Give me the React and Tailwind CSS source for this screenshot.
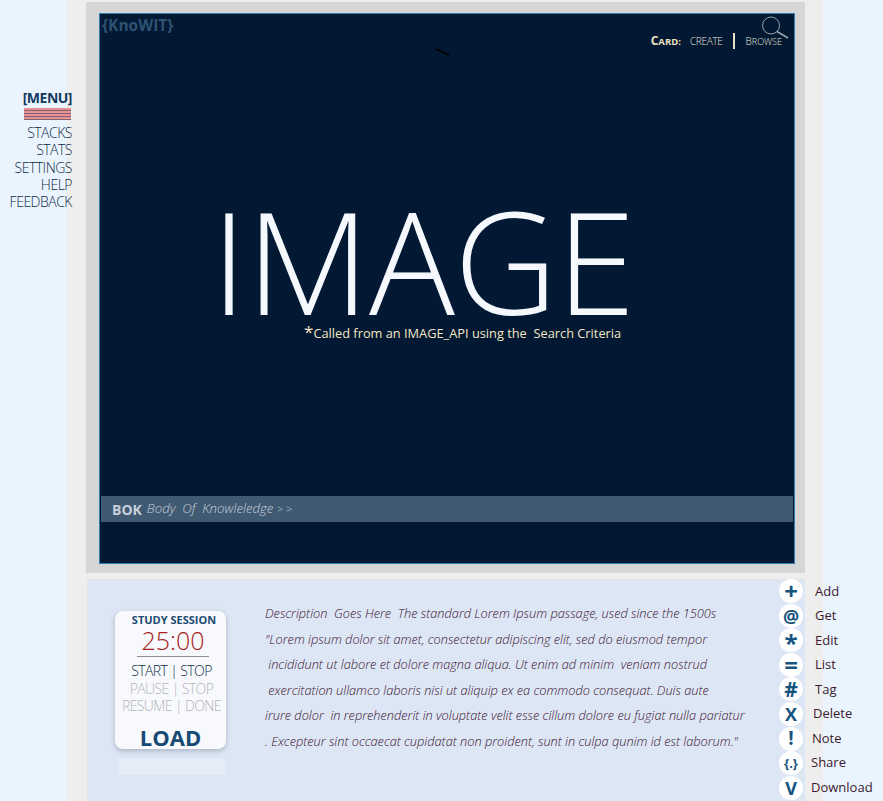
const menuItems = ['STACKS', 'STATS', 'SETTINGS', 'HELP', 'FEEDBACK'];

const actions = [
  { glyph: '+', label: 'Add', gap: 'ml-[12px]', size: 'text-[24px]' },
  { glyph: '@', label: 'Get', gap: 'ml-[12px]', size: 'text-[18px]' },
  { glyph: '*', label: 'Edit', gap: 'ml-[12px]', size: 'text-[24px] pt-[6px]' },
  { glyph: '=', label: 'List', gap: 'ml-[12px]', size: 'text-[24px]' },
  { glyph: '#', label: 'Tag', gap: 'ml-[12px]', size: 'text-[21px]' },
  { glyph: 'X', label: 'Delete', gap: 'ml-[10px]', size: 'text-[18px]' },
  { glyph: '!', label: 'Note', gap: 'ml-[9px]', size: 'text-[19px]' },
  { glyph: '{.}', label: 'Share', gap: 'ml-[8px]', size: 'text-[13px]' },
  { glyph: 'V', label: 'Download', gap: 'ml-[8px]', size: 'text-[18px]' },
];

const description = [
  'Description  Goes Here  The standard Lorem Ipsum passage, used since the 1500s',
  '"Lorem ipsum dolor sit amet, consectetur adipiscing elit, sed do eiusmod tempor',
  ' incididunt ut labore et dolore magna aliqua. Ut enim ad minim  veniam nostrud',
  ' exercitation ullamco laboris nisi ut aliquip ex ea commodo consequat. Duis aute',
  'irure dolor  in reprehenderit in voluptate velit esse cillum dolore eu fugiat nulla pariatur',
  '. Excepteur sint occaecat cupidatat non proident, sunt in culpa qunim id est laborum."',
];

function Menu() {
  return (
    <aside className="relative z-10 w-[67px] shrink-0 pt-[90px] text-right text-[14px] font-light leading-[17.3px] tracking-[-0.5px] text-[#0f2a45]">
      <div className="-ml-4 -mr-[5px] whitespace-nowrap">
        <div className="font-bold text-[#123a5e] leading-[16px]">[MENU]</div>
        <div className="ml-auto mr-px mt-[2px] mb-[4px] h-[12px] w-[47px] bg-[repeating-linear-gradient(#ec8f92_0,#ec8f92_2px,#7d6474_2px,#7d6474_3px)]" />
        {menuItems.map((item) => (
          <div key={item}>{item}</div>
        ))}
      </div>
    </aside>
  );
}

function Hero() {
  return (
    <section className="bg-[#d6d6d6] pt-[11px] px-[13px] pb-[9px] w-[719px] ml-[19px]">
      <div className="relative h-[551px] w-[696px] border border-[#2f7fb8] bg-[#021833] flex flex-col">
        <div className="relative flex items-start justify-between h-[40px]">
          <span className="pl-[2px] text-[15.5px] leading-[22px] font-bold text-[#2d5272]">{'{KnoWIT}'}</span>
          <div className="mr-[12px] mt-[18px] flex items-center text-[10px] text-[#e6e6dc] font-light">
            <span className="font-bold text-[#ece3c2] text-[12px]">C<span className="text-[9.5px]">ARD:</span></span>
            <span className="ml-[9px] tracking-[-0.3px]">CREATE</span>
            <span className="ml-[10px] mr-[11px] h-[16px] w-[2px] bg-[#e6e0c8]" />
            <span>B<span className="text-[9px]">ROWSE</span></span>
          </div>
          {/* lupa */}
          <svg className="absolute right-[5px] top-[2px]" width="28" height="24" viewBox="0 0 28 24" fill="none" stroke="#9aa3ad">
            <circle cx="10" cy="9.5" r="8.5" strokeWidth="1" />
            <path d="M16 15.5 L27 22" strokeWidth="1.6" />
          </svg>
        </div>
        <svg className="absolute left-[336px] top-[34px]" width="14" height="8" viewBox="0 0 14 8">
          <path d="M0 1 L13 7" stroke="#000" strokeWidth="1.6" />
        </svg>
        <div className="mt-[131px] pl-[111px] text-[143px] leading-[150px] font-light text-[#f5f9fd] whitespace-nowrap tracking-[-0.8px]">IMAGE</div>
        <div className="mt-[-12px] pl-[204px] text-[12.8px] leading-[20px] text-[#f3e7c4] whitespace-pre">
          <span className="text-[17px] leading-none">*</span>Called from an IMAGE_API using the  Search Criteria
        </div>
        <div className="mx-px mt-[153px] flex h-[26px] items-center bg-[#415a73] pl-[11px] text-[#c7d0da] whitespace-pre">
          <span className="text-[14px] font-bold">BOK</span>
          <span className="ml-[5px] text-[13.2px] font-light italic">Body  Of  Knowleledge <span className="text-[11px]">&gt; &gt;</span></span>
        </div>
      </div>
    </section>
  );
}

function StudyCard() {
  return (
    <div className="w-[111px] shrink-0 ml-[27px] mt-[31px]">
      <div className="h-[138px] rounded-lg bg-[#f7f9fc] shadow-[0_2px_5px_rgba(80,90,110,0.35)] text-center">
        <div className="pt-[1px] pl-[7px] text-[11px] font-bold leading-[15px] text-[#1d4a70]">STUDY SESSION</div>
        <div className="pl-[5px] text-[25px] font-light leading-[26px] text-[#a81c24]">25:00</div>
        <div className="ml-[22px] mt-[3px] h-px w-[72px] bg-[#8f8f8f]" />
        <div className="mt-[5px] pl-[2px] text-[14px] font-light leading-[17.5px] tracking-[-0.6px] whitespace-nowrap">
          <div className="text-[#0f2d4a]">START | STOP</div>
          <div className="text-[#b4b4b9]">PAUSE | STOP</div>
          <div className="text-[#b4b4b9]">RESUME | DONE</div>
        </div>
        <div className="mt-[7px] text-[22px] font-bold leading-[30px] text-[#174a73]">LOAD</div>
      </div>
      <div className="ml-[3px] mt-[9px] h-[17px] w-[108px] rounded bg-[#e6ecf5]" />
    </div>
  );
}

function Actions() {
  return (
    <ul className="absolute left-[691px] top-[-1px]">
      {actions.map((a) => (
        <li key={a.label} className="flex h-[24.55px] items-center whitespace-nowrap">
          <span className={`flex h-[24px] w-[24px] shrink-0 items-center justify-center rounded-full bg-white font-bold leading-none text-[#155480] ${a.size}`}>
            {a.glyph}
          </span>
          <span className={`text-[13px] text-[#3d1a2c] ${a.gap}`}>{a.label}</span>
        </li>
      ))}
    </ul>
  );
}

function Details() {
  return (
    <section className="relative ml-[20px] mt-[6px] flex h-[222px] w-[718px] border-t border-l border-[#e4e4e8] bg-[#dde6f4]">
      <StudyCard />
      <div className="ml-[39px] mt-[21px] whitespace-pre text-[12.75px] font-light italic leading-[25.6px] text-[#3a1232]">
        {description.map((line) => (
          <div key={line}>{line}</div>
        ))}
      </div>
      <Actions />
    </section>
  );
}

export default function App() {
  return (
    <div
      className="flex h-[801px] w-[883px] overflow-hidden bg-[#eaf4ff]"
      style={{ fontFamily: '"Open Sans", "Liberation Sans", sans-serif' }}
    >
      <Menu />
      <main className="h-full w-[756px] shrink-0 bg-[#eeeeee] pt-[2px]">
        <Hero />
        <Details />
      </main>
    </div>
  );
}
